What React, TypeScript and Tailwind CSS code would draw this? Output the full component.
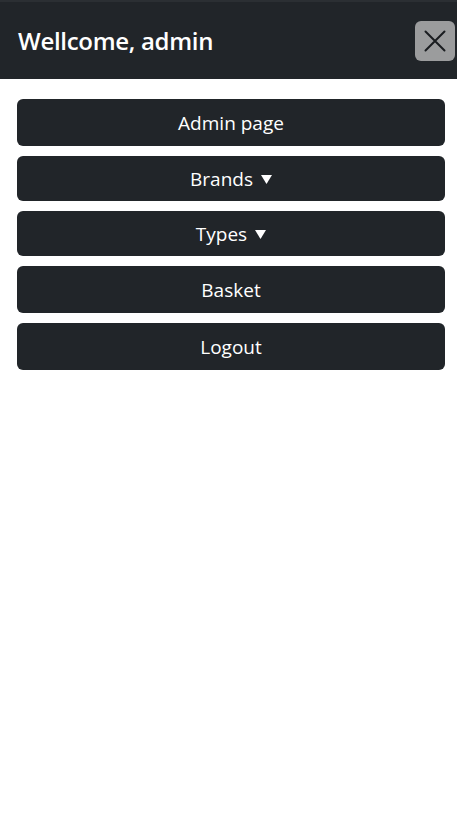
const items = [
  { label: 'Admin page', caret: false },
  { label: 'Brands', caret: true },
  { label: 'Types', caret: true },
  { label: 'Basket', caret: false },
  { label: 'Logout', caret: false },
];

export default function App() {
  return (
    <div className="min-h-[833px] bg-white" style={{ fontFamily: '"Open Sans", "Noto Sans", sans-serif' }}>
      <header className="h-[79px] bg-[#212529] border-t-2 border-[#2b2f33] flex items-center justify-between pl-[18px] pr-[2px]">
        <h5 className="text-white text-[24px] font-semibold tracking-[-0.3px] leading-none">Wellcome, admin</h5>
        <button className="w-[40px] h-[40px] rounded-[6px] bg-[#9b9c9d] flex items-center justify-center text-[#1a1d20]">
          {/* close icon */}
          <svg width="22" height="22" viewBox="0 0 22 22" fill="none">
            <path d="M1.5 1.5L20.5 20.5M20.5 1.5L1.5 20.5" stroke="currentColor" strokeWidth="2" strokeLinecap="round" />
          </svg>
        </button>
      </header>
      <nav className="flex flex-col gap-[10px] px-[17px] pt-[20px] pr-[12px]">
        {items.map((it) => (
          <button
            key={it.label}
            className={`${it.caret ? 'h-[45px]' : 'h-[47px]'} w-full rounded-[6px] bg-[#212529] text-white text-[19px] flex items-center justify-center gap-[8px] pt-[1px]`}
          >
            <span>{it.label}</span>
            {it.caret && (
              <svg width="11" height="9" viewBox="0 0 11 9" className="mt-[1px]">
                <path d="M0 0H11L5.5 9Z" fill="currentColor" />
              </svg>
            )}
          </button>
        ))}
      </nav>
    </div>
  );
}
